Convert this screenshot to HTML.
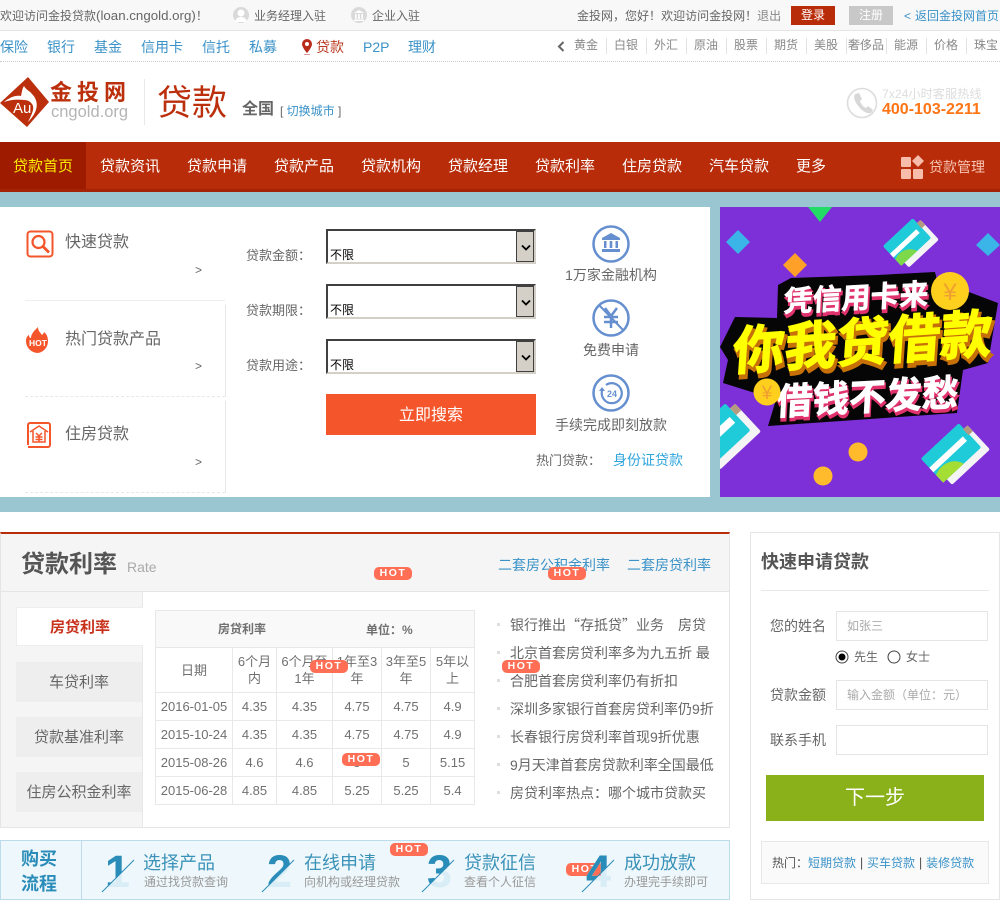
<!DOCTYPE html>
<html lang="zh-CN"><head><meta charset="utf-8"><title>贷款</title>
<style>
html,body{margin:0;padding:0;background:#fff}
body{position:relative;width:1000px;height:909px;overflow:hidden;font-family:"Liberation Sans","Noto Sans CJK SC",sans-serif;color:#666;font-size:12px}
.t{position:absolute;line-height:20px;white-space:nowrap}
.b{position:absolute}
.c{text-align:center}
.hot{position:absolute;width:38px;height:13px;line-height:13px;background:#ff6e55;border-radius:5px;color:#fff;font-weight:bold;font-size:10.500px;letter-spacing:1.500px;text-align:center;z-index:5}
.blue{color:#3a92c8}
.g{color:#888}
.sel{position:absolute;left:326px;width:210px;height:35px;box-sizing:border-box;border:2px solid #404040;border-right:2px solid #d4d0c8;border-bottom:2px solid #d4d0c8;background:#fff}
.sel i{position:absolute;right:0;top:0;width:18px;height:31px;background:#d4d0c8;border:1px solid #404040;box-sizing:border-box}
.sel svg{position:absolute;left:3px;top:12px}
.sel span{position:absolute;left:2px;top:16px;font-family:"WenQuanYi Zen Hei","Noto Sans CJK SC",sans-serif;font-size:12px;line-height:16px;color:#000}
table{position:absolute;left:155px;top:610px;width:320px;height:195px;border-collapse:collapse;table-layout:fixed;font-size:13px;color:#707070;text-align:center;z-index:1}
td{border:1px solid #e8e8e8;padding:0;line-height:17px}
.tab{position:absolute;left:16px;width:126px;height:40px;line-height:42px;background:#eee;text-align:center;font-size:15px}
.inp{position:absolute;left:836px;width:152px;height:30px;box-sizing:border-box;border:1px solid #e5e5e5;line-height:28px;padding-left:10px;color:#aaa;font-size:12px;background:#fff}
.sp{display:inline-block;width:11px;text-align:center;font-size:13px}
.q{font-family:"Noto Sans CJK SC",sans-serif}
.p{font-family:"Noto Sans CJK TC",sans-serif}
</style></head><body>

<!-- top bar -->
<div class="b" style="left:0;top:0;width:1000px;height:30px;background:#f8f8f8;border-bottom:1px solid #e4e4e4"></div>
<div class="t" style="left:0;top:6px;font-size:12px">欢迎访问金投贷款<span style="font-size:13.300px">(loan.cngold.org)</span><span class="p">！</span></div>
<svg class="b" style="left:232px;top:6px" width="18" height="18" viewBox="0 0 18 18"><circle cx="9" cy="9" r="8" fill="#d9d9d9"/><circle cx="9" cy="7" r="3.500" fill="#fff"/><path d="M3 16c1-4 3-5 6-5s5 1 6 5z" fill="#fff"/></svg>
<div class="t" style="left:254px;top:6px">业务经理入驻</div>
<svg class="b" style="left:350px;top:6px" width="18" height="18" viewBox="0 0 18 18"><circle cx="9" cy="9" r="8" fill="#d9d9d9"/><path d="M4 7l5-3 5 3zM5 8h1.600v5H5zM8.200 8h1.600v5H8.200zM11.400 8H13v5h-1.600zM4 13.500h10V15H4z" fill="#fff"/></svg>
<div class="t" style="left:372px;top:6px">企业入驻</div>
<div class="t" style="left:577px;top:6px">金投网<span class="p">，</span>您好<span class="p">！</span>欢迎访问金投网<span class="p">！</span><span class="g">退出</span></div>
<div class="b c" style="left:791px;top:6px;width:44px;height:19px;line-height:19px;background:#b92c09;color:#fff">登录</div>
<div class="b c" style="left:849px;top:6px;width:44px;height:19px;line-height:19px;background:#c8c8c8;color:#fff">注册</div>
<div class="t blue" style="left:904px;top:6px"><span style="margin-right:4px">&lt;</span>返回金投网首页</div>

<!-- sub nav -->
<div class="b" style="left:0;top:61px;width:1000px;border-top:1px dotted #ccc"></div>
<div class="t blue" style="left:0;top:37px;font-size:14px">保险</div>
<div class="t blue" style="left:47px;top:37px;font-size:14px">银行</div>
<div class="t blue" style="left:94px;top:37px;font-size:14px">基金</div>
<div class="t blue" style="left:141px;top:37px;font-size:14px">信用卡</div>
<div class="t blue" style="left:202px;top:37px;font-size:14px">信托</div>
<div class="t blue" style="left:249px;top:37px;font-size:14px">私募</div>
<svg class="b" style="left:301px;top:39px" width="12" height="17" viewBox="0 0 12 17"><path d="M6 0a5 5 0 0 0-5 5c0 3.500 5 9 5 9s5-5.500 5-9a5 5 0 0 0-5-5z" fill="#b92c1c"/><circle cx="6" cy="5" r="2" fill="#fff"/><path d="M3 15.500h6" stroke="#d99"/></svg>
<div class="t" style="left:316px;top:37px;font-size:14px;color:#b93a20">贷款</div>
<div class="t blue" style="left:363px;top:37px;font-size:14px">P2P</div>
<div class="t blue" style="left:408px;top:37px;font-size:14px">理财</div>
<svg class="b" style="left:557px;top:41px" width="8" height="11" viewBox="0 0 8 11"><path d="M6.500 1L2 5.500 6.500 10" fill="none" stroke="#666" stroke-width="2"/></svg>
<div class="t g" style="left:574px;top:35px">黄金</div>
<div class="t g" style="left:614px;top:35px">白银</div>
<div class="t g" style="left:654px;top:35px">外汇</div>
<div class="t g" style="left:694px;top:35px">原油</div>
<div class="t g" style="left:734px;top:35px">股票</div>
<div class="t g" style="left:774px;top:35px">期货</div>
<div class="t g" style="left:814px;top:35px">美股</div>
<div class="t g" style="left:848px;top:35px">奢侈品</div>
<div class="t g" style="left:894px;top:35px">能源</div>
<div class="t g" style="left:934px;top:35px">价格</div>
<div class="t g" style="left:974px;top:35px">珠宝</div>
<div class="b" style="left:606px;top:38px;width:1px;height:16px;background:#e3e3e3;box-shadow:40px 0 #e3e3e3,80px 0 #e3e3e3,120px 0 #e3e3e3,160px 0 #e3e3e3,200px 0 #e3e3e3,240px 0 #e3e3e3,280px 0 #e3e3e3,320px 0 #e3e3e3,360px 0 #e3e3e3"></div>

<!-- logo -->
<svg class="b" style="left:0;top:76px" width="50" height="52" viewBox="0 0 50 52"><path d="M28 1L49 26 27 51 0 27z" fill="#bb2f0c"/><path d="M4 26C10 21 16 19 21 20C22 16 22 13 24 10C26 14 30 15 32 18C38 24 40 34 28 46C32 38 35 32 32 28C30 25 27 24 24 24C16 23 10 24 4 26z" fill="#fff"/><text x="13" y="37" font-size="15" fill="#fff" font-family="Liberation Sans">Au</text></svg>
<div class="t" style="left:50px;top:82px;font-size:22px;line-height:22px;font-weight:bold;color:#bb2f0c;letter-spacing:5px">金投网</div>
<div class="t" style="left:51px;top:102px;font-size:16.500px;color:#b5b5b5">cngold.org</div>
<div class="b" style="left:144px;top:79px;width:1px;height:46px;background:#e8e8e8"></div>
<div class="t" style="left:157px;top:84px;font-size:35px;line-height:40px;color:#bb2f0c">贷款</div>
<div class="t" style="left:242px;top:100px;font-size:16px;font-weight:bold;color:#666">全国</div>
<div class="t" style="left:280px;top:101px;font-size:12px">[ <span class="blue">切换城市</span> ]</div>
<svg class="b" style="left:846px;top:87px" width="32" height="32" viewBox="0 0 32 32"><circle cx="16" cy="16" r="14.500" fill="none" stroke="#ddd" stroke-width="1.600"/><path d="M9 7l4-1 3 6-2 2c1 3 3 6 6 7l2-2 5 4-2 3c-3 1-8-1-12-6S7 11 9 7z" fill="#d8d8d8"/></svg>
<div class="t" style="left:882px;top:84px;font-size:12.200px;color:#ddd">7x24小时客服热线</div>
<div class="t" style="left:882px;top:100px;font-size:16px;font-weight:bold;color:#ff7414">400-103-2211</div>

<!-- red nav -->
<div class="b" style="left:0;top:142px;width:1000px;height:47px;background:#b92c09;border-bottom:3px solid #a42206"></div>
<div class="b" style="left:0;top:142px;width:86px;height:47px;background:#9e1b00"></div>
<div class="t" style="left:13px;top:157px;font-size:15px;color:#ffee00">贷款首页</div>
<div class="t" style="left:100px;top:157px;font-size:15px;color:#fff">贷款资讯</div>
<div class="t" style="left:187px;top:157px;font-size:15px;color:#fff">贷款申请</div>
<div class="t" style="left:274px;top:157px;font-size:15px;color:#fff">贷款产品</div>
<div class="t" style="left:361px;top:157px;font-size:15px;color:#fff">贷款机构</div>
<div class="t" style="left:448px;top:157px;font-size:15px;color:#fff">贷款经理</div>
<div class="t" style="left:535px;top:157px;font-size:15px;color:#fff">贷款利率</div>
<div class="t" style="left:622px;top:157px;font-size:15px;color:#fff">住房贷款</div>
<div class="t" style="left:709px;top:157px;font-size:15px;color:#fff">汽车贷款</div>
<div class="t" style="left:796px;top:157px;font-size:15px;color:#fff">更多</div>
<svg class="b" style="left:900px;top:154px" width="26" height="26" viewBox="0 0 26 26" fill="#f8bdaa"><rect x="1" y="3" width="10" height="10" rx="1"/><rect x="1" y="15" width="10" height="10" rx="1"/><rect x="13" y="15" width="10" height="10" rx="1"/><path d="M18 1l6 6-6 6-6-6z"/></svg>
<div class="t" style="left:929px;top:157px;font-size:14px;color:#f8c4b4">贷款管理</div>

<!-- hero -->
<div class="b" style="left:0;top:192px;width:1000px;height:320px;background:#9ac6d2"></div>
<div class="b" style="left:0;top:207px;width:710px;height:290px;background:#fff"></div>

<svg class="b" style="left:26px;top:230px" width="28" height="28" viewBox="0 0 28 28" fill="none" stroke="#f4552b"><rect x="1.500" y="1.500" width="25" height="25" rx="3" stroke-width="2"/><circle cx="12.500" cy="12" r="6" stroke-width="2.200"/><path d="M17 16.500l6 6" stroke-width="2.800"/></svg>
<div class="t" style="left:65px;top:233px;font-size:16px">快速贷款</div>
<div class="t" style="left:195px;top:260px;font-size:12px">&gt;</div>
<div class="b" style="left:25px;top:300px;width:200px;height:1px;background:#eee"></div>
<div class="b" style="left:225px;top:305px;width:1px;height:92px;background:#e8e8e8"></div>
<div class="b" style="left:25px;top:396px;width:200px;border-top:1px dashed #e8e8e8"></div>
<svg class="b" style="left:25px;top:326px" width="26" height="28" viewBox="0 0 26 28"><path d="M13 27a12 12 0 0 1-12-12c0-3 1-5 3-6 0 2 1 3 2 3 0-4 3-7 7-11 0 4 2 5 4 8 1-1 2-2 2-3 3 2 4 6 4 9a12 12 0 0 1-10 12z" fill="#f4552b"/><text x="13" y="20" text-anchor="middle" font-size="8.500" font-weight="bold" fill="#fff" font-family="Liberation Sans">HOT</text></svg>
<div class="t" style="left:65px;top:330px;font-size:16px">热门贷款产品</div>
<div class="t" style="left:195px;top:356px;font-size:12px">&gt;</div>
<div class="b" style="left:225px;top:401px;width:1px;height:92px;background:#e8e8e8"></div>
<div class="b" style="left:25px;top:492px;width:200px;border-top:1px dashed #e8e8e8"></div>
<svg class="b" style="left:25px;top:422px" width="28" height="28" viewBox="0 0 28 28" fill="none" stroke="#f4552b"><path d="M3 23V3a2 2 0 0 1 2-2h18a2 2 0 0 1 2 2v20a2 2 0 0 1-2 2H3" stroke-width="2"/><path d="M5 10l9-6 9 6M8 9v11h12V9M11 11l3 3 3-3M14 14v6M10.500 15h7M10.500 17.500h7" stroke-width="1.500"/></svg>
<div class="t" style="left:65px;top:425px;font-size:16px">住房贷款</div>
<div class="t" style="left:195px;top:452px;font-size:12px">&gt;</div>

<div class="t" style="left:246px;top:245px;font-size:13px">贷款金额<span class="p">：</span></div>
<div class="t" style="left:246px;top:300px;font-size:13px">贷款期限<span class="p">：</span></div>
<div class="t" style="left:246px;top:355px;font-size:13px">贷款用途<span class="p">：</span></div>
<div class="sel" style="top:229px"><span>不限</span><i><svg width="12" height="8" viewBox="0 0 12 8"><path d="M2 1.500l4 4 4-4" fill="none" stroke="#000" stroke-width="1.800"/></svg></i></div>
<div class="sel" style="top:284px"><span>不限</span><i><svg width="12" height="8" viewBox="0 0 12 8"><path d="M2 1.500l4 4 4-4" fill="none" stroke="#000" stroke-width="1.800"/></svg></i></div>
<div class="sel" style="top:339px"><span>不限</span><i><svg width="12" height="8" viewBox="0 0 12 8"><path d="M2 1.500l4 4 4-4" fill="none" stroke="#000" stroke-width="1.800"/></svg></i></div>
<div class="b c" style="left:326px;top:394px;width:210px;height:41px;line-height:43px;background:#f4552b;color:#fff;font-size:16px">立即搜索</div>

<svg class="b" style="left:591px;top:224px" width="40" height="40" viewBox="0 0 40 40"><circle cx="20" cy="20" r="17.500" fill="none" stroke="#658fcf" stroke-width="2.500"/><path d="M20 9l9 5v2H11v-2zM13 17h2.500v7H13zM18.700 17h2.600v7h-2.600zM24.500 17H27v7h-2.500zM11 25h18v3H11z" fill="#658fcf"/></svg>
<div class="t c" style="left:551px;width:120px;top:265px;font-size:14px">1万家金融机构</div>
<svg class="b" style="left:591px;top:298px" width="40" height="40" viewBox="0 0 40 40" fill="none" stroke="#658fcf"><circle cx="20" cy="20" r="17.500" stroke-width="2.500"/><path d="M8 7l25 26" stroke-width="2"/><path d="M14 10l6 8 6-8M13 19h14M13 24h14M20 18v12" stroke-width="2.500"/></svg>
<div class="t c" style="left:551px;width:120px;top:340px;font-size:14px">免费申请</div>
<svg class="b" style="left:591px;top:373px" width="40" height="40" viewBox="0 0 40 40" fill="none" stroke="#658fcf"><circle cx="20" cy="20" r="17.500" stroke-width="2.500"/><path d="M11 18a10 10 0 1 0 4-6" stroke-width="2.200"/><path d="M8 18h6l-3-4z" fill="#658fcf" stroke="none"/><text x="21" y="24" text-anchor="middle" font-size="9" font-weight="bold" fill="#658fcf" stroke="none" font-family="Liberation Sans">24</text></svg>
<div class="t c" style="left:531px;width:160px;top:415px;font-size:14px">手续完成即刻放款</div>
<div class="t" style="left:536px;top:450px;font-size:13px">热门贷款<span class="p">：</span></div>
<div class="t" style="left:613px;top:450px;font-size:14px;color:#2fa5dd">身份证贷款</div>

<!-- banner -->
<svg class="b" style="left:720px;top:207px" width="280" height="290" viewBox="720 207 280 290">
<rect x="720" y="207" width="280" height="290" fill="#7d2fd8"/>
<path d="M808 207h24l-12 15z" fill="#22dc66"/>
<path d="M738 230l12 12-12 12-12-12z" fill="#3bb4e8"/>
<path d="M988 233l12 12-12 11-12-11z" fill="#3bb4e8"/>
<path d="M795 253l12 12-12 12-12-12z" fill="#ffa028"/>
<circle cx="858" cy="452" r="9.500" fill="#ffbb2c"/><circle cx="823" cy="476" r="9.500" fill="#ffbb2c"/>
<g transform="translate(907 242) rotate(-43)"><rect x="-16" y="-7" width="41" height="27" rx="2" fill="#f4f4f4"/><rect x="-20.500" y="-13.500" width="41" height="27" rx="2" fill="#1fcbd9"/><path d="M-20.500 13.500V5c8-4 18-1 22 8.500z" fill="#7dd94a"/><rect x="-20.500" y="-3" width="36" height="5" fill="#fff"/><rect x="20" y="-7" width="5" height="7" fill="#b59a80"/></g>
<g transform="translate(951 453) rotate(-43)"><rect x="-21" y="-9" width="52" height="33" rx="2" fill="#f4f4f4"/><rect x="-26" y="-16.500" width="52" height="33" rx="2" fill="#1fcbd9"/><path d="M-26 16.500V6c10-5 24-2 28 10.500z" fill="#a4dd34"/><rect x="-26" y="-4" width="46" height="6" fill="#fff"/><rect x="25" y="-9" width="6" height="8" fill="#b59a80"/></g>
<g transform="translate(722 435) rotate(-43)"><rect x="-25" y="-14" width="56" height="38" rx="2" fill="#f4f4f4"/><rect x="-30" y="-21" width="54" height="37" rx="2" fill="#1fcbd9"/><rect x="-30" y="-8" width="48" height="8" fill="#fff"/><rect x="24" y="-14" width="7" height="9" fill="#b59a80"/></g>
<path d="M778 285L791 278 878 275 935 272 937 280 998 303 988 363 963 370 957 413 768 426 775 403 755 393 723 383 728 360 720 347 735 317 777 318z" fill="#060606"/>
<g font-family="Liberation Sans,Noto Sans CJK SC,sans-serif" font-weight="bold">
<g transform="rotate(-3 855 298) translate(855 308) skewX(-6)" text-anchor="middle" font-size="29"><text x="1" y="3" fill="#e0336e" stroke="#e0336e" stroke-width="2">凭信用卡来</text><text fill="#fff" stroke="#fff" stroke-width=".6">凭信用卡来</text></g>
<g transform="rotate(-4 860 343) translate(860 361) skewX(-8)" text-anchor="middle" font-size="52"><text x="2" y="4" fill="#c87008" stroke="#c87008" stroke-width="3">你我贷借款</text><text fill="#ffff00" stroke="#ffff00" stroke-width="1.200">你我贷借款</text></g>
<g transform="rotate(-3 866 397) translate(866 410) skewX(-6)" text-anchor="middle" font-size="36.500"><text x="1" y="3" fill="#e0336e" stroke="#e0336e" stroke-width="2">借钱不发愁</text><text fill="#fff" stroke="#fff" stroke-width=".8">借钱不发愁</text></g>
</g>
<circle cx="950" cy="291" r="19" fill="#ffcf1e"/><text x="950" y="300" text-anchor="middle" font-size="24" fill="#f0a030" font-family="Liberation Sans">¥</text>
<circle cx="767" cy="392" r="13.500" fill="#ffcf1e"/><text x="767" y="399" text-anchor="middle" font-size="19" fill="#f0a030" font-family="Liberation Sans">¥</text>
</svg>

<!-- rate section -->
<div class="b" style="left:0;top:532px;width:730px;height:296px;box-sizing:border-box;border:1px solid #e5e5e5;border-top:2px solid #b92c09"></div>
<div class="b" style="left:1px;top:534px;width:728px;height:57px;background:#f5f5f5;border-bottom:1px solid #e5e5e5"></div>
<div class="b" style="left:1px;top:592px;width:141px;height:235px;background:#f5f5f5;border-right:1px solid #e8e8e8"></div>
<div class="t" style="left:21px;top:555px;font-size:24px;font-weight:bold;color:#555">贷款利率</div>
<div class="t" style="left:127px;top:557px;font-size:14px;color:#aaa">Rate</div>
<div class="t blue" style="left:498px;top:555px;font-size:14px">二套房公积金利率</div>
<div class="t blue" style="left:627px;top:555px;font-size:14px">二套房贷利率</div>
<div class="hot" style="left:374px;top:567px">HOT</div>
<div class="hot" style="left:548px;top:567px">HOT</div>
<div class="hot" style="left:310px;top:660px">HOT</div>
<div class="hot" style="left:502px;top:660px">HOT</div>
<div class="hot" style="left:342px;top:753px">HOT</div>
<div class="hot" style="left:390px;top:843px">HOT</div>
<div class="hot" style="left:566px;top:863px">HOT</div>

<div class="tab" style="top:607px;height:39px;line-height:39px;box-sizing:border-box;border:1px solid #eee;border-right:0;background:#fff;width:127px;color:#c8301a;font-weight:bold">房贷利率</div>
<div class="tab" style="top:662px">车贷利率</div>
<div class="tab" style="top:717px">贷款基准利率</div>
<div class="tab" style="top:772px">住房公积金利率</div>

<table>
<colgroup><col style="width:77px"><col style="width:44px"><col style="width:56px"><col style="width:49px"><col style="width:49px"><col style="width:44px"></colgroup>
<tr style="height:37px;background:#f9f9f9;font-size:12px;font-weight:bold"><td colspan="6" style="position:relative"><span style="position:absolute;left:62px;top:10px">房贷利率</span><span style="position:absolute;left:210px;top:10px">单位<span class="p">：</span>%</span></td></tr>
<tr style="height:45px"><td>日期</td><td>6个月<br>内</td><td>6个月至<br>1年</td><td>1年至3<br>年</td><td>3年至5<br>年</td><td>5年以<br>上</td></tr>
<tr style="height:28px"><td>2016-01-05</td><td>4.35</td><td>4.35</td><td>4.75</td><td>4.75</td><td>4.9</td></tr>
<tr style="height:28px"><td>2015-10-24</td><td>4.35</td><td>4.35</td><td>4.75</td><td>4.75</td><td>4.9</td></tr>
<tr style="height:28px"><td>2015-08-26</td><td>4.6</td><td>4.6</td><td>5</td><td>5</td><td>5.15</td></tr>
<tr style="height:28px"><td>2015-06-28</td><td>4.85</td><td>4.85</td><td>5.25</td><td>5.25</td><td>5.4</td></tr>
</table>

<div class="b" style="left:497px;top:623px;width:3px;height:3px;background:#ddd;box-shadow:0 28px #ddd,0 56px #ddd,0 84px #ddd,0 112px #ddd,0 140px #ddd,0 168px #ddd"></div>
<div class="t" style="left:510px;top:615px;font-size:14px">银行推出<span class="q">“</span>存抵贷<span class="q">”</span>业务　房贷</div>
<div class="t" style="left:510px;top:643px;font-size:14px">北京首套房贷利率多为九五折 最</div>
<div class="t" style="left:510px;top:671px;font-size:14px">合肥首套房贷利率仍有折扣</div>
<div class="t" style="left:510px;top:699px;font-size:14px">深圳多家银行首套房贷利率仍9折</div>
<div class="t" style="left:510px;top:727px;font-size:14px">长春银行房贷利率首现9折优惠</div>
<div class="t" style="left:510px;top:755px;font-size:14px">9月天津首套房贷款利率全国最低</div>
<div class="t" style="left:510px;top:783px;font-size:14px">房贷利率热点<span class="p">：</span>哪个城市贷款买</div>

<!-- apply box -->
<div class="b" style="left:750px;top:532px;width:250px;height:368px;box-sizing:border-box;border:1px solid #e5e5e5"></div>
<div class="t" style="left:761px;top:552px;font-size:18px;font-weight:bold;color:#555">快速申请贷款</div>
<div class="b" style="left:761px;top:590px;width:228px;height:1px;background:#e8e8e8"></div>
<div class="t" style="left:770px;top:616px;font-size:14px">您的姓名</div>
<div class="inp" style="top:611px">如张三</div>
<svg class="b" style="left:835px;top:650px" width="14" height="14" viewBox="0 0 14 14"><circle cx="7" cy="7" r="6" fill="#fff" stroke="#444"/><circle cx="7" cy="7" r="3.500" fill="#000"/></svg>
<div class="t" style="left:854px;top:647px;font-size:12px">先生</div>
<svg class="b" style="left:887px;top:650px" width="14" height="14" viewBox="0 0 14 14"><circle cx="7" cy="7" r="6" fill="#fff" stroke="#444"/></svg>
<div class="t" style="left:906px;top:647px;font-size:12px">女士</div>
<div class="t" style="left:770px;top:685px;font-size:14px">贷款金额</div>
<div class="inp" style="top:680px">输入金额<span class="p">（</span>单位<span class="p">：</span>元<span class="p">）</span></div>
<div class="t" style="left:770px;top:730px;font-size:14px">联系手机</div>
<div class="inp" style="top:725px"></div>
<div class="b c" style="left:766px;top:775px;width:218px;height:46px;line-height:46px;background:#8ab01a;color:#fff;font-size:20px">下一步</div>
<div class="b" style="left:761px;top:841px;width:228px;height:43px;box-sizing:border-box;border:1px solid #e8e8e8;background:#fafafa"></div>
<div class="t" style="left:772px;top:853px;font-size:12px;color:#555">热门<span class="p">：</span><span class="blue">短期贷款</span><span class="sp">|</span><span class="blue">买车贷款</span><span class="sp">|</span><span class="blue">装修贷款</span></div>

<!-- flow -->
<div class="b" style="left:0;top:840px;width:730px;height:60px;box-sizing:border-box;border:1px solid #bcdcec;background:#eef7fb"></div>
<div class="b" style="left:81px;top:841px;width:1px;height:58px;background:#bcdcec"></div>
<div class="t" style="left:21px;top:847px;font-size:18px;line-height:25px;font-weight:bold;color:#2a8cb8;white-space:normal;width:38px">购买流程</div>
<svg class="b" style="left:0;top:840px;z-index:6" width="730" height="60" viewBox="0 840 730 60">
<defs>
<clipPath id="a1"><path d="M60 840H154L102 892H60z"/></clipPath><clipPath id="a2"><path d="M220 840H314L262 892H220z"/></clipPath><clipPath id="a3"><path d="M380 840H474L422 892H380z"/></clipPath><clipPath id="a4"><path d="M540 840H634L582 892H540z"/></clipPath>
</defs>
<g font-family="Liberation Sans" font-weight="bold" font-size="45">
<text x="105" y="887" fill="#d9edf6">1</text><text x="105" y="887" fill="#2a8cb8" clip-path="url(#a1)">1</text>
<text x="267" y="887" fill="#d9edf6">2</text><text x="267" y="887" fill="#2a8cb8" clip-path="url(#a2)">2</text>
<text x="427" y="887" fill="#d9edf6">3</text><text x="427" y="887" fill="#2a8cb8" clip-path="url(#a3)">3</text>
<text x="586" y="887" fill="#d9edf6">4</text><text x="586" y="887" fill="#2a8cb8" clip-path="url(#a4)">4</text>
</g>
<path d="M102 892l32-32M262 892l32-32M422 892l32-32M582 892l32-32" stroke="#2a8cb8" stroke-width="1"/>
</svg>
<div class="t" style="left:143px;top:853px;font-size:18px;color:#3a92b8">选择产品</div>
<div class="t" style="left:144px;top:872px;color:#999">通过找贷款查询</div>
<div class="t" style="left:304px;top:853px;font-size:18px;color:#3a92b8">在线申请</div>
<div class="t" style="left:304px;top:872px;color:#999">向机构或经理贷款</div>
<div class="t" style="left:464px;top:853px;font-size:18px;color:#3a92b8">贷款征信</div>
<div class="t" style="left:464px;top:872px;color:#999">查看个人征信</div>
<div class="t" style="left:624px;top:853px;font-size:18px;color:#3a92b8">成功放款</div>
<div class="t" style="left:624px;top:872px;color:#999">办理完手续即可</div>

</body></html>
